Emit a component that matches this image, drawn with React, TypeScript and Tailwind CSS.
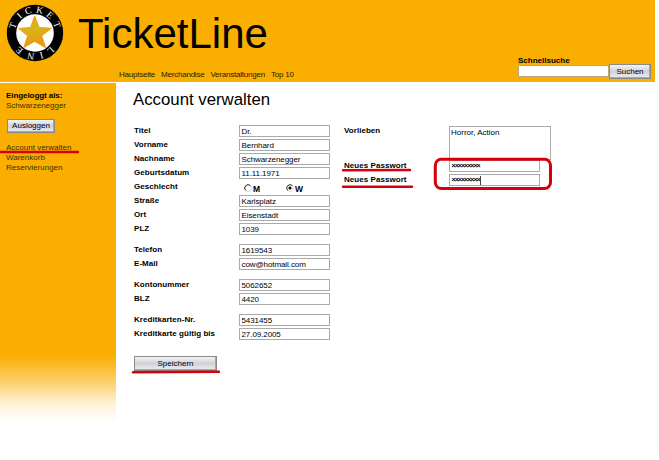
import React from 'react';

const groups: [string, string][][] = [
  [
    ['Titel', 'Dr.'],
    ['Vorname', 'Bernhard'],
    ['Nachname', 'Schwarzenegger'],
    ['Geburtsdatum', '11.11.1971'],
    ['Geschlecht', ''],
    ['Straße', 'Karlsplatz'],
    ['Ort', 'Eisenstadt'],
    ['PLZ', '1039'],
  ],
  [
    ['Telefon', '1619543'],
    ['E-Mail', 'cow@hotmail.com'],
  ],
  [
    ['Kontonummer', '5062652'],
    ['BLZ', '4420'],
  ],
  [
    ['Kreditkarten-Nr.', '5431455'],
    ['Kreditkarte gültig bis', '27.09.2005'],
  ],
];

const button =
  'flex items-center justify-center border border-[#8b8b86] bg-gradient-to-b from-[#f4f4f6] via-[#cfd1da] to-[#eeeef2] shadow-[inset_-1px_-1px_0_#a5a5aa]';

function Logo() {
  const letters = [
    ['T', -71],
    ['I', -42],
    ['C', -17],
    ['K', 12],
    ['E', 40],
    ['T', 69],
    ['L', 138],
    ['I', 164],
    ['N', 190],
    ['E', 222],
  ] as const;
  return (
    <svg width="58" height="58" viewBox="0 0 58 58" className="shrink-0">
      <defs>
        <linearGradient id="star" x1="0" y1="0" x2="0.3" y2="1">
          <stop offset="0" stopColor="#f0a010" />
          <stop offset="0.5" stopColor="#d5b51c" />
          <stop offset="1" stopColor="#ef9410" />
        </linearGradient>
      </defs>
      <circle cx="29" cy="29" r="28.2" fill="#000" />
      <circle cx="29" cy="29" r="18.8" fill="#fff" />
      <path
        d="M28.7 12 L33.2 23.4 L45.5 24.2 L35.8 31.8 L39.7 43.8 L28.7 37.4 L17.8 43.6 L21.5 31.8 L12.6 24.4 L24.5 23.4Z"
        fill="url(#star)"
        stroke="#e6a018"
        strokeWidth=".9"
      />
      {letters.map(([c, a]) => (
        <text
          key={a}
          x="29"
          y="8.7"
          transform={`rotate(${a} 29 29)`}
          textAnchor="middle"
          fontSize="9.5"
          fill="#fff"
          fontFamily="Liberation Serif, serif"
        >
          {c}
        </text>
      ))}
    </svg>
  );
}

function Field({ value }: { value: string }) {
  return (
    <div className="h-[12px] w-[91px] border border-[#a9a9a9] bg-white pt-px pl-[1.5px] text-[8px] leading-[10px] tracking-[-0.08px] whitespace-pre">
      {value}
    </div>
  );
}

function PasswordField({ caret }: { caret?: boolean }) {
  return (
    <div className="flex h-[12px] w-[91px] items-start border border-[#a9a9a9] bg-white pl-[1.5px]">
      <span className="pt-px text-[7px] leading-[8px] font-bold tracking-[-0.95px]">×××××××××</span>
      {caret && <span className="mt-px h-[9px] w-px bg-[#444]" />}
    </div>
  );
}

function Radio({ label, checked }: { label: string; checked?: boolean }) {
  return (
    <div className="flex w-[42px] items-center gap-px text-[8.5px] font-bold">
      <svg width="8" height="8" viewBox="0 0 8 8">
        <circle cx="4" cy="4" r="3.4" fill="#fff" stroke="#ccc" strokeWidth=".8" />
        <path d="M1.6 6.4A3.4 3.4 0 0 1 6.4 1.6" fill="none" stroke="#333" />
        {checked && <circle cx="4" cy="4" r="1.5" />}
      </svg>
      <span className="pt-px">{label}</span>
    </div>
  );
}

function Label({ children }: { children: React.ReactNode }) {
  return (
    <div className="h-[12px] w-[105px] text-[8px] leading-[12px] font-bold tracking-[0.05px] whitespace-nowrap">
      {children}
    </div>
  );
}

export default function App() {
  return (
    <div className="relative h-[460px] w-[659px] overflow-hidden bg-white font-['Liberation_Sans',Arial,sans-serif] text-[8px] leading-[10px] text-black">
      <header className="flex h-[82px] w-[655px] border-b border-[#d9b44c] bg-[#f9ae00] pl-[6px]">
        <div className="pt-[4px]">
          <Logo />
        </div>
        <div className="flex w-[453px] shrink-0 flex-col pl-[14px]">
          <h1 className="h-[70px] pt-[10px] text-[42px] leading-[48px]">TicketLine</h1>
          <nav className="flex gap-[6px] pl-[41px] tracking-[-0.22px] whitespace-nowrap text-[#2b2100]">
            <span>Hauptseite</span>
            <span>Merchandise</span>
            <span>Veranstaltungen</span>
            <span>Top 10</span>
          </nav>
        </div>
        <div className="shrink-0 pt-[56px]">
          <div className="pl-px font-bold">Schnellsuche</div>
          <div className="-mt-px flex pl-px">
            <div className="h-[12px] w-[91px] border border-[#bca873] bg-white" />
            <button className={`${button} -mt-px h-[15px] w-[42px]`}>Suchen</button>
          </div>
        </div>
      </header>

      <div className="flex pt-px">
        <aside className="h-[340px] w-[116px] bg-[linear-gradient(to_bottom,#f9ae00_0,#f9ae00_272px,#fbcf67_298px,#fef1d2_320px,#fff_338px)] pt-[8px] pl-[6px] text-[#3b2e0c]">
          <div className="font-bold tracking-[-0.07px] text-black">Eingeloggt als:</div>
          <div>Schwarzenegger</div>
          <button className={`${button} mt-[8px] ml-px mb-[10px] h-[14px] w-[48px] text-black`}>
            Ausloggen
          </button>
          <div>Account verwalten</div>
          <div>Warenkorb</div>
          <div>Reservierungen</div>
        </aside>

        <main className="pl-[17px]">
          <h2 className="h-[42px] pt-[7px] text-[16.8px] leading-[20px]">Account verwalten</h2>
          <div className="flex pl-px">
            <div className="flex w-[210px] flex-col gap-[7px]">
              {groups.map((rows, i) => (
                <div key={i}>
                  {rows.map(([label, value]) => (
                    <div key={label} className="flex h-[14px]">
                      <Label>{label}</Label>
                      {label === 'Geschlecht' ? (
                        <div className="flex h-[14px] items-center pl-[5px]">
                          <Radio label="M" />
                          <Radio label="W" checked />
                        </div>
                      ) : (
                        <Field value={value} />
                      )}
                    </div>
                  ))}
                </div>
              ))}
            </div>
            <div>
              <div className="flex h-[35px]">
                <Label>Vorlieben</Label>
                <div className="mt-px h-[34px] w-[102px] border border-[#a9a9a9] pt-px pl-px">
                  Horror, Action
                </div>
              </div>
              <div className="flex h-[14px]">
                <Label>Neues Passwort</Label>
                <PasswordField />
              </div>
              <div className="flex h-[14px]">
                <Label>Neues Passwort</Label>
                <PasswordField caret />
              </div>
            </div>
          </div>
          <button className={`${button} mt-[14px] ml-px h-[15px] w-[83px]`}>Speichern</button>
        </main>
      </div>

      <svg
        className="pointer-events-none absolute inset-0"
        width="659"
        height="460"
        fill="none"
        stroke="#d5000c"
        strokeWidth="2.4"
        strokeLinecap="round"
      >
        <path d="M0 152H78M343 170.3L410 170M343 186.8H412M133 372.3L219 371.8" />
        <rect x="435.3" y="159.3" width="115.2" height="29.2" rx="6" strokeWidth="3" />
      </svg>
    </div>
  );
}
